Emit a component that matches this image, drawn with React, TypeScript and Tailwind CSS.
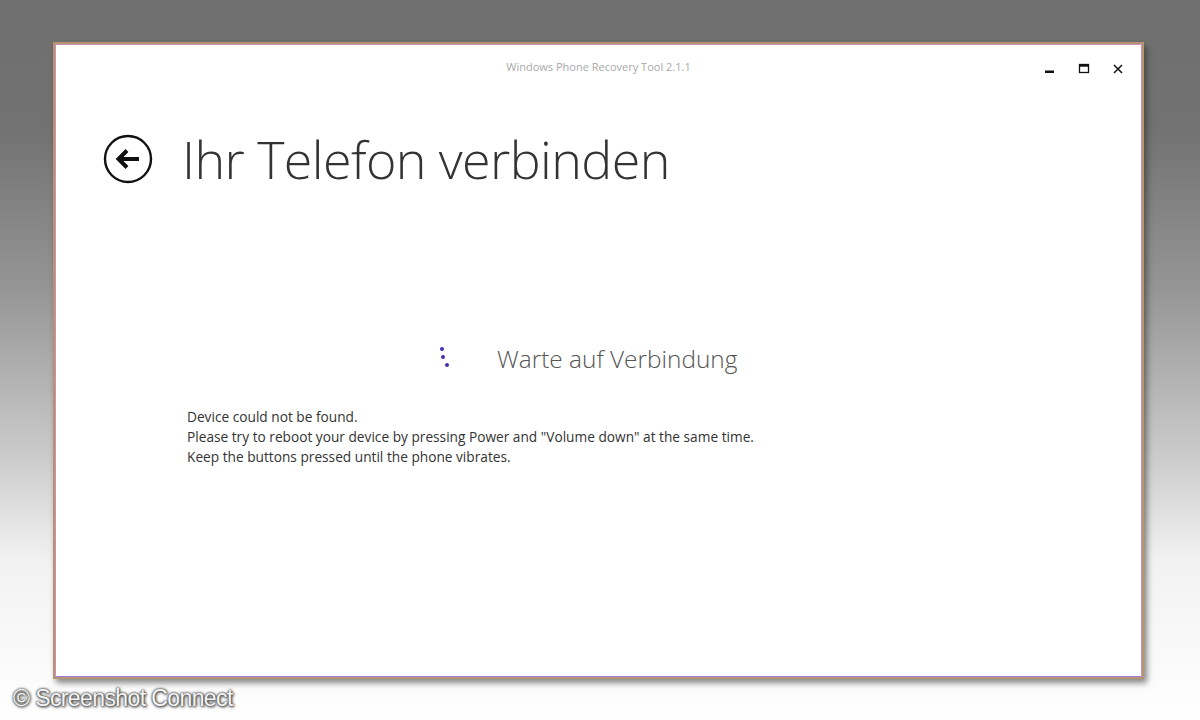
import React from "react";

const BackIcon = () => (
  <svg width="50" height="50" viewBox="0 0 50 50" fill="none">
    <circle cx="25" cy="25" r="23" stroke="#111" strokeWidth="2.4" />
    <path d="M36 25H16" stroke="#111" strokeWidth="4" strokeLinecap="butt" />
    <path d="M24 16.5L15.5 25L24 33.5" stroke="#111" strokeWidth="4" strokeLinejoin="miter" />
  </svg>
);

const WindowControls = () => (
  <div className="flex items-center gap-[22px] text-black">
    <svg width="12" height="12" viewBox="0 0 12 12">
      <rect x="1" y="7.5" width="9" height="2.5" fill="#111" />
    </svg>
    <svg width="12" height="12" viewBox="0 0 12 12">
      <rect x="1.5" y="1.5" width="9" height="8" fill="none" stroke="#111" strokeWidth="1.3" />
      <rect x="1.5" y="1.5" width="9" height="2.2" fill="#111" />
    </svg>
    <svg width="12" height="12" viewBox="0 0 12 12">
      <path d="M2 2L10 10M10 2L2 10" stroke="#111" strokeWidth="1.5" />
    </svg>
  </div>
);

const Spinner = () => (
  <div className="relative h-[26px] w-[12px]">
    <span className="absolute left-[0px] top-[1px] h-[4px] w-[4px] rounded-full bg-[#4b2bb0]" />
    <span className="absolute left-[1px] top-[9px] h-[4px] w-[4px] rounded-full bg-[#4b2bb0]" />
    <span className="absolute left-[5px] top-[17px] h-[4px] w-[4px] rounded-full bg-[#4b2bb0]" />
  </div>
);

export default function App() {
  return (
    <div
      className="relative h-[720px] w-[1200px] overflow-hidden bg-[linear-gradient(to_bottom,#6f6f6f_0%,#727272_18%,#959595_40%,#c8c8c8_62%,#f2f2f2_78%,#ffffff_100%)]"
      style={{ fontFamily: '"Open Sans", "Noto Sans", sans-serif' }}
    >
      <div className="pl-[53px] pt-[42px]">
        <div className="h-[637px] w-[1091px] border-2 border-[#b8946e] shadow-[3px_4px_6px_rgba(40,40,40,0.55)]">
          <div className="flex h-full w-full flex-col border border-[#c98fc0] border-b-[#a27ce6] bg-white">
            <div className="relative flex h-[44px] items-center justify-center">
              <span className="text-[11px] text-[#a9a9a9]">
                Windows Phone Recovery Tool 2.1.1
              </span>
              <div className="absolute right-[17px] top-[18px]">
                <WindowControls />
              </div>
            </div>

            <div className="flex items-center pl-[47px] pt-[44px]">
              <BackIcon />
              <h1 className="ml-[29px] text-[52px] font-light leading-none tracking-[-0.6px] text-[#333]">
                Ihr Telefon verbinden
              </h1>
            </div>

            <div className="mt-[161px] flex items-center pl-[384px]">
              <Spinner />
              <span className="ml-[45px] text-[24.4px] font-light leading-none text-[#555]">
                Warte auf Verbindung
              </span>
            </div>

            <div className="mt-[35px] pl-[131px] text-[13.7px] leading-[20px] text-[#333]">
              <p>Device could not be found.</p>
              <p>Please try to reboot your device by pressing Power and "Volume down" at the same time.</p>
              <p>Keep the buttons pressed until the phone vibrates.</p>
            </div>
          </div>
        </div>
      </div>

      <div
        className="pl-[13px] pt-[8px] text-[23px] leading-none tracking-[-0.6px] text-[#f4f4f4] [text-shadow:0_0_2px_#444,0_0_3px_#555,1px_1px_3px_#333]"
        style={{ fontFamily: '"Liberation Sans", Arial, sans-serif' }}
      >
        © Screenshot Connect
      </div>
    </div>
  );
}
